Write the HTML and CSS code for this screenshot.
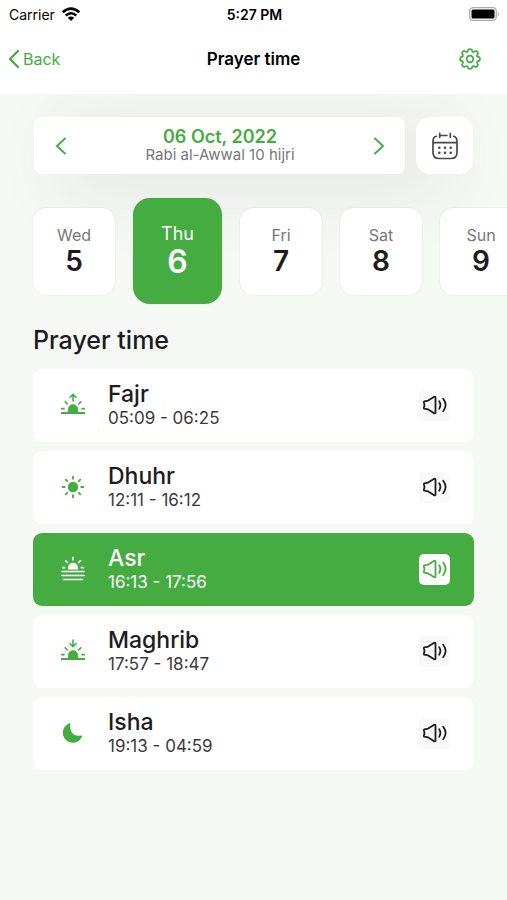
FILE: index.html
```html
<!DOCTYPE html>
<html lang="en">
<head>
<meta charset="utf-8">
<meta name="viewport" content="width=device-width, initial-scale=1">
<title>Prayer time</title>
<link rel="stylesheet" href="styles.css">
</head>
<body>
<svg class="sprite" aria-hidden="true">
  <symbol id="speaker" viewBox="0 0 24 24"><g fill="none" stroke="currentColor" stroke-width="1.8" stroke-linejoin="round" stroke-linecap="round"><path d="M1.4 8.3 5.2 7.6 11.2 3.8C12 3.3 12.5 3.7 12.5 4.5V19.5C12.5 20.3 12 20.7 11.2 20.2L5.2 16.4 1.4 15.7C.8 15.5.7 14.9.9 14.4Q2 12 .9 9.6C.7 9.1.8 8.5 1.4 8.3Z"/><path d="M16.2 8.3Q18.6 12 16.2 15.7M20.2 5.8Q25 12 20.2 18.2"/></g></symbol>
  <symbol id="rays" viewBox="0 0 26 26"><path d="M5.2 9.9 7.4 12M20.8 9.9 18.6 12M1.8 16.7H4M22 16.7H24.2" fill="none" stroke="currentColor" stroke-width="1.7" stroke-linecap="round"/></symbol>
</svg>
<header class="top">
  <div class="status">
    <div class="carrier">Carrier
      <svg width="20" height="15" viewBox="0 0 20 15"><g fill="none" stroke="#000" stroke-width="2.6"><path d="M1.7 5.2Q10 -2 18.3 5.2M4.7 8.5Q10 4 15.3 8.5"/></g><path d="M6.8 10.7Q10 8.3 13.2 10.7L10 14Z"/></svg>
    </div>
    <time class="clock">5:27 PM</time>
    <svg class="battery" width="31" height="14" viewBox="0 0 31 14"><rect x=".7" y=".7" width="26.6" height="12.6" rx="3.5" fill="#fff" stroke="#aaa" stroke-width="1.3"/><rect x="2.5" y="2.5" width="23" height="9" rx="1.5"/><path d="M28.8 4.7Q31.4 7 28.8 9.3Z" fill="#aaa"/></svg>
  </div>
  <nav class="bar">
    <a class="back" href="#">
      <svg width="12" height="20" viewBox="0 0 12 20"><path d="M10 2 2 10 10 18" fill="none" stroke="currentColor" stroke-width="2.3" stroke-linecap="round" stroke-linejoin="round"/></svg>Back</a>
    <h1>Prayer time</h1>
    <button class="settings" aria-label="Settings">
      <svg width="24" height="24" viewBox="0 0 24 24"><g fill="none" stroke="currentColor" stroke-width="1.7" stroke-linejoin="round"><path d="M10.4 2.4Q12 1.6 13.6 2.4L14.4 4.6Q15 5.2 15.8 4.9L17.8 3.9Q19.6 4.4 20.1 6.2L19.1 8.2Q18.8 9 19.4 9.6L21.6 10.4Q22.4 12 21.6 13.6L19.4 14.4Q18.8 15 19.1 15.8L20.1 17.8Q19.6 19.6 17.8 20.1L15.8 19.1Q15 18.8 14.4 19.4L13.6 21.6Q12 22.4 10.4 21.6L9.6 19.4Q9 18.8 8.2 19.1L6.2 20.1Q4.4 19.6 3.9 17.8L4.9 15.8Q5.2 15 4.6 14.4L2.4 13.6Q1.6 12 2.4 10.4L4.6 9.6Q5.2 9 4.9 8.2L3.9 6.2Q4.4 4.4 6.2 3.9L8.2 4.9Q9 5.2 9.6 4.6Z"/><circle cx="12" cy="12" r="3.3"/></g></svg>
    </button>
  </nav>
</header>
<main>
  <section class="picker">
    <div class="date">
      <button aria-label="Previous day"><svg width="12" height="18" viewBox="0 0 12 18"><path d="M10 1.5 2 9 10 16.5" fill="none" stroke="currentColor" stroke-width="1.9" stroke-linecap="round"/></svg></button>
      <div class="date-text"><strong>06 Oct, 2022</strong><span>Rabi al-Awwal 10 hijri</span></div>
      <button aria-label="Next day"><svg width="12" height="18" viewBox="0 0 12 18"><path d="M2 1.5 10 9 2 16.5" fill="none" stroke="currentColor" stroke-width="1.9" stroke-linecap="round"/></svg></button>
    </div>
    <button class="calendar" aria-label="Open calendar">
      <svg width="28" height="30" viewBox="0 0 28 30"><g fill="none" stroke="currentColor" stroke-width="1.7" stroke-linecap="round"><path d="M5.3 5.3C3 6 2 7.7 2 10.3V21.5C2 25.5 4 27.5 8 27.5H20C24 27.5 26 25.5 26 21.5V10.3C26 7.7 25 6 22.7 5.3M8.7 2.3V6.3M19.3 2.3V6.3M8.7 4.5H16M2 11.7H26"/></g><g fill="currentColor"><circle cx="8.3" cy="16.7" r="1.3"/><circle cx="14" cy="16.7" r="1.3"/><circle cx="19.7" cy="16.7" r="1.3"/><circle cx="8.3" cy="21.7" r="1.3"/><circle cx="14" cy="21.7" r="1.3"/><circle cx="19.7" cy="21.7" r="1.3"/></g></svg>
    </button>
  </section>
  <section class="days" aria-label="Days">
    <button class="day"><span>Wed</span><b>5</b></button>
    <button class="day current" aria-pressed="true"><span>Thu</span><b>6</b></button>
    <button class="day"><span>Fri</span><b>7</b></button>
    <button class="day"><span>Sat</span><b>8</b></button>
    <button class="day"><span>Sun</span><b>9</b></button>
  </section>
  <h2>Prayer time</h2>
  <ul class="prayers">
    <li class="prayer">
      <svg class="symbol" viewBox="0 0 26 26"><use href="#rays"/><path d="M8 20V17.3A5 5 0 0 1 18 17.3V20Z" fill="currentColor"/><path d="M1 21H25" stroke="currentColor" stroke-width="2"/><path d="M13 9V2.5M10 5.3 13 2.3 16 5.3" fill="none" stroke="currentColor" stroke-width="1.6" stroke-linecap="round"/></svg>
      <div class="info"><h3>Fajr</h3><p>05:09 - 06:25</p></div>
      <button class="sound" aria-label="Fajr sound"><svg viewBox="0 0 24 24"><use href="#speaker"/></svg></button>
    </li>
    <li class="prayer">
      <svg class="symbol" viewBox="0 0 26 26"><circle cx="13" cy="13" r="5.2" fill="currentColor"/><path d="M13 2.7V4.7M13 21.3V23.3M2.7 13H4.7M21.3 13H23.3M5.7 5.7 7.2 7.2M18.8 18.8 20.3 20.3M5.7 20.3 7.2 18.8M18.8 7.2 20.3 5.7" stroke="currentColor" stroke-width="1.9" stroke-linecap="round"/></svg>
      <div class="info"><h3>Dhuhr</h3><p>12:11 - 16:12</p></div>
      <button class="sound" aria-label="Dhuhr sound"><svg viewBox="0 0 24 24"><use href="#speaker"/></svg></button>
    </li>
    <li class="prayer current">
      <svg class="symbol" viewBox="0 0 26 26"><path d="M8 13.5V11.8A5 5 0 0 1 18 11.8V13.5Z" fill="currentColor"/><path d="M13 1.3V3.8M5.7 4.8 7.4 6.5M20.3 4.8 18.6 6.5M2.7 11.7H4.5M21.5 11.7H23.3" stroke="currentColor" stroke-width="1.7" stroke-linecap="round"/><path d="M2 15.5H24M2 19.5H24M3.5 23.5H22.5" stroke="currentColor" stroke-width="1.6" stroke-linecap="round"/></svg>
      <div class="info"><h3>Asr</h3><p>16:13 - 17:56</p></div>
      <button class="sound" aria-label="Asr sound"><svg viewBox="0 0 24 24"><use href="#speaker"/></svg></button>
    </li>
    <li class="prayer">
      <svg class="symbol" viewBox="0 0 26 26"><use href="#rays"/><path d="M8 20V17.3A5 5 0 0 1 18 17.3V20Z" fill="currentColor"/><path d="M1 21H25" stroke="currentColor" stroke-width="2"/><path d="M13 2V8.5M10 5.7 13 8.7 16 5.7" fill="none" stroke="currentColor" stroke-width="1.6" stroke-linecap="round"/></svg>
      <div class="info"><h3>Maghrib</h3><p>17:57 - 18:47</p></div>
      <button class="sound" aria-label="Maghrib sound"><svg viewBox="0 0 24 24"><use href="#speaker"/></svg></button>
    </li>
    <li class="prayer">
      <svg class="symbol" viewBox="0 0 26 26"><path d="M9.6 3.3A10 10 0 1 0 22.2 16.2Q22.4 15.2 21.3 15.5C14.5 17.3 8.7 12 10.5 4.3Q10.7 3 9.6 3.3Z" fill="currentColor"/></svg>
      <div class="info"><h3>Isha</h3><p>19:13 - 04:59</p></div>
      <button class="sound" aria-label="Isha sound"><svg viewBox="0 0 24 24"><use href="#speaker"/></svg></button>
    </li>
  </ul>
</main>
</body>
</html>
```
FILE: styles.css
```css
:root {
  --green: #45ac42;
  --ink: #1c1c1e;
  --gutter: 33px;
}

* { box-sizing: border-box; }

body {
  margin: 0;
  min-height: 100vh;
  overflow-x: hidden;
  background: #f5f8f5;
  color: var(--ink);
  font-family: Inter, "Liberation Sans", sans-serif;
}

h1, h2, h3, p, ul { margin: 0; padding: 0; }
svg { display: block; }
.sprite { width: 0; height: 0; position: absolute; }

button {
  border: 0;
  padding: 0;
  background: none;
  color: inherit;
  font: inherit;
}

.top {
  position: relative;
  z-index: 1;
  background: #fff;
}

.status, .bar {
  display: grid;
  grid-template-columns: 1fr auto 1fr;
  align-items: center;
}

.status {
  height: 28px;
  padding: 0 7px 0 9px;
  color: #000;
  font-size: 14px;
}

.carrier { display: flex; align-items: center; gap: 6px; }
.clock { font-weight: 600; }
.battery { justify-self: end; }

.bar {
  height: 66px;
  padding: 0 8px 4px;
}

.back {
  display: flex;
  align-items: center;
  gap: 3px;
  color: var(--green);
  font-size: 16px;
  text-decoration: none;
}

h1 { color: #000; font-size: 17px; font-weight: 600; }
.settings { justify-self: end; margin-right: 17px; color: var(--green); }

.picker {
  display: flex;
  gap: 11px;
  padding: 23px 34px 0;
}

.date, .calendar {
  height: 57px;
  background: #fff;
}

.date {
  flex: 1;
  display: flex;
  align-items: center;
  justify-content: space-between;
  padding: 0 20px 0 21px;
  border-radius: 8px;
  color: var(--green);
  box-shadow: 34px 12px 70px 10px rgba(60, 70, 60, 0.08);
}

.date-text {
  display: flex;
  flex-direction: column;
  align-items: center;
  padding-bottom: 2px;
}

.date-text strong { font-size: 18px; line-height: 20px; font-weight: 600; }
.date-text span { color: #77777a; font-size: 15px; line-height: 16px; }

.calendar {
  position: relative;
  width: 57px;
  display: grid;
  place-items: center;
  border-radius: 14px;
  color: #49494b;
}

.days {
  position: relative;
  display: flex;
  align-items: center;
  gap: 18px;
  padding: 24px 0 24px var(--gutter);
  overflow: hidden;
}

.day {
  flex: none;
  display: flex;
  flex-direction: column;
  align-items: center;
  justify-content: center;
  width: 82px;
  height: 87px;
  padding-bottom: 3px;
  border-radius: 14px;
  background: #fff;
  box-shadow: 0 0 2px rgba(60, 70, 60, 0.12);
}

.day span { color: #77777a; font-size: 16px; line-height: 22px; }
.day b { font-size: 28px; line-height: 30px; font-weight: 600; }

.day.current {
  width: 89px;
  height: 106px;
  border-radius: 17px;
  background: var(--green);
  color: #fff;
}

.day.current span { color: inherit; font-size: 18px; line-height: 24px; }
.day.current b { font-size: 32px; line-height: 32px; }

h2 {
  padding: 0 var(--gutter);
  font-size: 25px;
  line-height: 25px;
  font-weight: 500;
}

.prayers {
  display: flex;
  flex-direction: column;
  gap: 9px;
  padding: 16px var(--gutter) 24px;
  list-style: none;
}

.prayer {
  display: flex;
  align-items: center;
  min-height: 73px;
  padding: 0 24px 1px 27px;
  border-radius: 9px;
  background: #fff;
}

.symbol { width: 26px; height: 26px; margin-right: 22px; color: var(--green); }
.info { flex: 1; padding-top: 2px; }
h3 { font-size: 23px; line-height: 25px; font-weight: 500; }
.info p { color: #3a3a3c; font-size: 17px; line-height: 23px; }

.sound {
  display: grid;
  place-items: center;
  width: 31px;
  height: 31px;
  border-radius: 5px;
  background: #f8f9f8;
}

.sound svg { width: 24px; height: 24px; }

.prayer.current { background: var(--green); color: #fff; }
.prayer.current .symbol, .prayer.current p { color: inherit; }
.prayer.current .sound { background: #fff; color: var(--green); }
```
